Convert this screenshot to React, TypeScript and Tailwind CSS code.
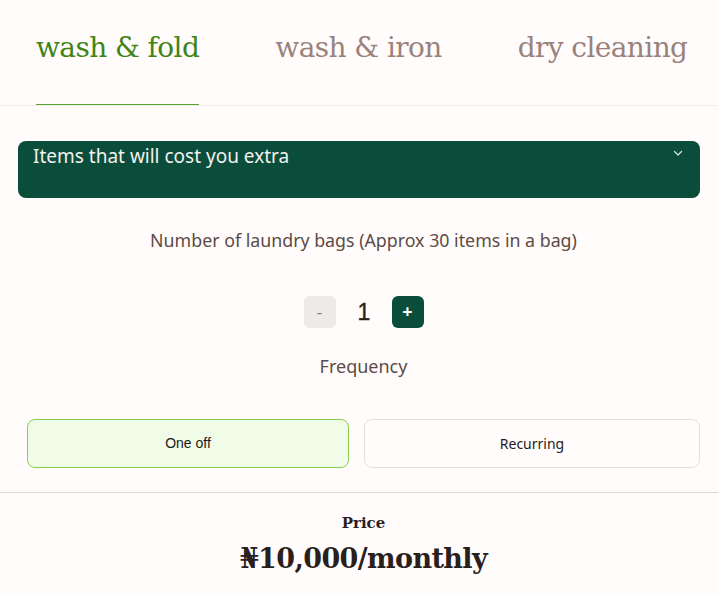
import { useState } from "react";

const tabs = ["wash & fold", "wash & iron", "dry cleaning"];

export default function App() {
  const [tab, setTab] = useState(0);
  const [bags, setBags] = useState(1);
  const [freq, setFreq] = useState("one");

  return (
    <div className="min-h-screen w-[718px] bg-[#fffcfb] font-['Noto_Sans',sans-serif]">
      <div className="flex gap-[76px] border-b border-[#f3eeec] pl-9">
        {tabs.map((t, i) => (
          <button
            key={t}
            onClick={() => setTab(i)}
            className={`flex h-[105px] items-center border-b pb-[9px] font-['DejaVu_Serif',serif] text-[28px] tracking-[-0.6px] ${
              tab === i ? "border-[#5aa02c] text-[#3f8416]" : "border-transparent text-[#9a827b]"
            }`}
          >
            {t}
          </button>
        ))}
      </div>

      <div className="px-[18px] pt-[35px]">
        <div className="flex h-[57px] items-start justify-between rounded-lg bg-[#0b4d3b] pl-[15px] pr-[16px] pt-[1px]">
          <span className="text-[19px] text-[#f4f1ee]">Items that will cost you extra</span>
          <svg width="12" height="12" viewBox="0 0 24 24" className="mt-[5px] text-[#cfe3da]" fill="none" stroke="currentColor" strokeWidth="2.5" strokeLinecap="round" strokeLinejoin="round">
            <path d="M5 9l7 7 7-7" />
          </svg>
        </div>
      </div>

      <div className="pl-[27px] pr-[18px]">
        <p className="mt-[29px] text-center text-[17.8px] text-[#5c4b46]">
          Number of laundry bags (Approx 30 items in a bag)
        </p>

        <div className="mt-[41px] flex items-center justify-center gap-[22px]">
          <button
            onClick={() => setBags((b) => Math.max(1, b - 1))}
            className="flex h-8 w-8 items-center justify-center rounded-md bg-[#eeeae8] text-[17px] text-[#8b7f7b]"
          >
            -
          </button>
          <span className="w-[12px] text-center font-['Liberation_Sans',sans-serif] text-[23px] font-medium text-[#2a1f1d] [-webkit-text-stroke:0.4px_#2a1f1d]">
            {bags}
          </span>
          <button
            onClick={() => setBags((b) => b + 1)}
            className="flex h-8 w-8 items-center justify-center rounded-md bg-[#0b4d3b] text-[18px] font-bold text-white"
          >
            +
          </button>
        </div>

        <p className="mt-[24px] text-center text-[18px] text-[#5c4b46]">Frequency</p>

        <div className="mt-[39px] flex gap-[15px]">
          <button
            onClick={() => setFreq("one")}
            className={`h-[49px] w-[322px] rounded-lg border font-['Liberation_Sans',sans-serif] text-[14px] text-[#1e1a19] ${
              freq === "one" ? "border-[#86cf4c] bg-[#f0fce8]" : "border-[#e7ded9]"
            }`}
          >
            One off
          </button>
          <button
            onClick={() => setFreq("rec")}
            className={`h-[49px] flex-1 rounded-lg border text-[14px] text-[#1e1a19] ${
              freq === "rec" ? "border-[#86cf4c] bg-[#f0fce8]" : "border-[#e7ded9]"
            }`}
          >
            Recurring
          </button>
        </div>
      </div>

      <div className="mt-[24px] border-t border-[#ddd7d2] pl-[27px] pr-[18px] pt-[19px] text-center font-['DejaVu_Serif',serif] text-[#2a1f1d]">
        <p className="text-[15px] font-bold">Price</p>
        <p className="mt-[4px] text-[27px] font-bold tracking-[-0.6px]">₦10,000/monthly</p>
      </div>
    </div>
  );
}
